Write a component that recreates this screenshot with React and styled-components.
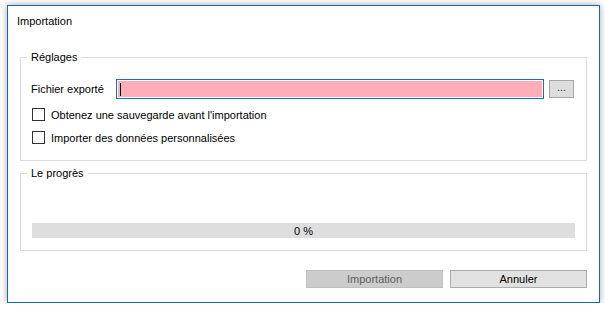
import React from "react";
import styled, { createGlobalStyle } from "styled-components";

const Global = createGlobalStyle`
  html, body { margin: 0; padding: 0; background: #ffffff; }
  body { font-family: "Liberation Sans", Arial, sans-serif; font-size: 11px; color: #000; }
  * { box-sizing: border-box; }
`;

const Window = styled.div`
  margin: 5px 0 0 7px;
  width: 593px;
  height: 298px;
  border: 1px solid #1a64b4;
  background: #fff;
  box-shadow: 0 0 7px rgba(0, 0, 0, 0.35);
  display: flex;
  flex-direction: column;
`;

const TitleBar = styled.div`
  height: 29px;
  padding-left: 9px;
  display: flex;
  align-items: center;
`;

const Body = styled.div`
  padding: 0 12px;
  display: flex;
  flex-direction: column;
`;

const Group = styled.fieldset`
  margin: ${(p) => p.$top}px 0 0 0;
  padding: 0 12px 0 10px;
  border: 1px solid #dcdcdc;
  height: ${(p) => p.$height}px;
  min-width: 0;
`;

const Legend = styled.legend`
  margin-left: -4px;
  padding: 0 4px;
  line-height: 15px;
`;

const FileRow = styled.div`
  margin-top: 14px;
  display: flex;
  align-items: center;
  height: 20px;
`;

const FieldLabel = styled.span`
  width: 85px;
  flex: none;
`;

const Input = styled.div`
  flex: 1;
  height: 20px;
  border: 1px solid #0a70d4;
  padding: 1px;
  background: #fff;
  display: flex;
`;

const InputFill = styled.div`
  flex: 1;
  background: #ffadb9;
  position: relative;
`;

const Caret = styled.span`
  position: absolute;
  left: 2px;
  top: 2px;
  width: 1px;
  height: 13px;
  background: #000;
`;

const BrowseButton = styled.button`
  margin-left: 5px;
  width: 25px;
  height: 18px;
  flex: none;
  border: 1px solid #a6a6a6;
  background: #dddddd;
  font-family: inherit;
  font-size: 11px;
  padding: 0 0 4px;
  line-height: 1;
  color: #333;
  display: flex;
  align-items: flex-end;
  justify-content: center;
`;

const CheckRow = styled.label`
  display: flex;
  align-items: center;
  gap: 6px;
  margin-top: ${(p) => p.$top}px;
  padding-left: 1px;
  height: 13px;
`;

const Box = styled.span`
  width: 13px;
  height: 13px;
  border: 1px solid #333;
  background: #fff;
  flex: none;
`;

const Progress = styled.div`
  margin: 42px -1px 0 1px;
  height: 15px;
  background: #dedede;
  display: flex;
  align-items: center;
  justify-content: center;
`;

const Footer = styled.div`
  margin-top: 19px;
  display: flex;
  justify-content: flex-end;
  gap: 7px;
`;

const Button = styled.button`
  width: 137px;
  height: 18px;
  font-family: inherit;
  font-size: 11px;
  padding: 0;
  border: 1px solid ${(p) => (p.disabled ? "#bfbfbf" : "#adadad")};
  background: ${(p) => (p.disabled ? "#cccccc" : "#e1e1e1")};
  color: ${(p) => (p.disabled ? "#5f5f5f" : "#000")};
  line-height: 16px;
`;

export default function App() {
  return (
    <>
      <Global />
      <Window>
        <TitleBar>Importation</TitleBar>
        <Body>
          <Group $top={15} $height={111}>
            <Legend>Réglages</Legend>
            <FileRow>
              <FieldLabel>Fichier exporté</FieldLabel>
              <Input>
                <InputFill>
                  <Caret />
                </InputFill>
              </Input>
              <BrowseButton>...</BrowseButton>
            </FileRow>
            <CheckRow $top={9}>
              <Box />
              Obtenez une sauvegarde avant l'importation
            </CheckRow>
            <CheckRow $top={10}>
              <Box />
              Importer des données personnalisées
            </CheckRow>
          </Group>
          <Group $top={5} $height={85}>
            <Legend>Le progrès</Legend>
            <Progress>0 %</Progress>
          </Group>
          <Footer>
            <Button disabled>Importation</Button>
            <Button>Annuler</Button>
          </Footer>
        </Body>
      </Window>
    </>
  );
}
